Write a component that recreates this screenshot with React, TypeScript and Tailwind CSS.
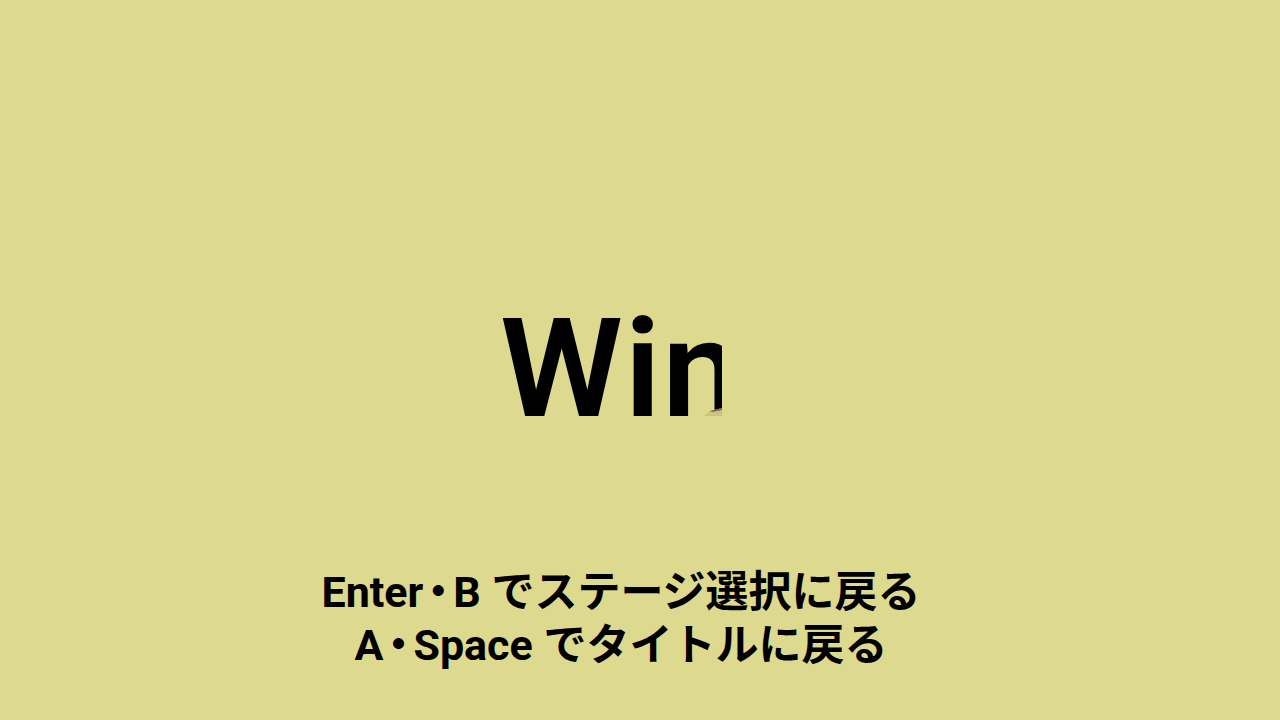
export default function App() {
  const dot = (
    <span className="inline-flex justify-center w-[30px] overflow-visible">・</span>
  );
  return (
    <div className="w-[1280px] h-[720px] bg-[#ddd98f] flex flex-col items-center overflow-hidden">
      <div className="relative mt-[299px] h-[117px] w-[222px] overflow-hidden self-start ml-[500px]">
        <div className="text-[140px] leading-[1] font-semibold tracking-[1.5px] text-black font-['Roboto',sans-serif] whitespace-nowrap">Win</div>
        <svg className="absolute right-0 bottom-0" width="18" height="8" viewBox="0 0 18 8">
          <polygon points="0,8 18,8 18,0 6,3" fill="#c9c483" />
          <polygon points="6,3 18,0 18,2 8,4" fill="#6f6b44" />
        </svg>
      </div>
      <div className="mt-[150px] mr-[38px] text-center text-black font-bold text-[43px] leading-[53px] font-['Roboto','Noto_Sans_CJK_JP',sans-serif] whitespace-nowrap">
        <div>Enter{dot}B でステージ選択に戻る</div>
        <div>A{dot}Space でタイトルに戻る</div>
      </div>
    </div>
  );
}
